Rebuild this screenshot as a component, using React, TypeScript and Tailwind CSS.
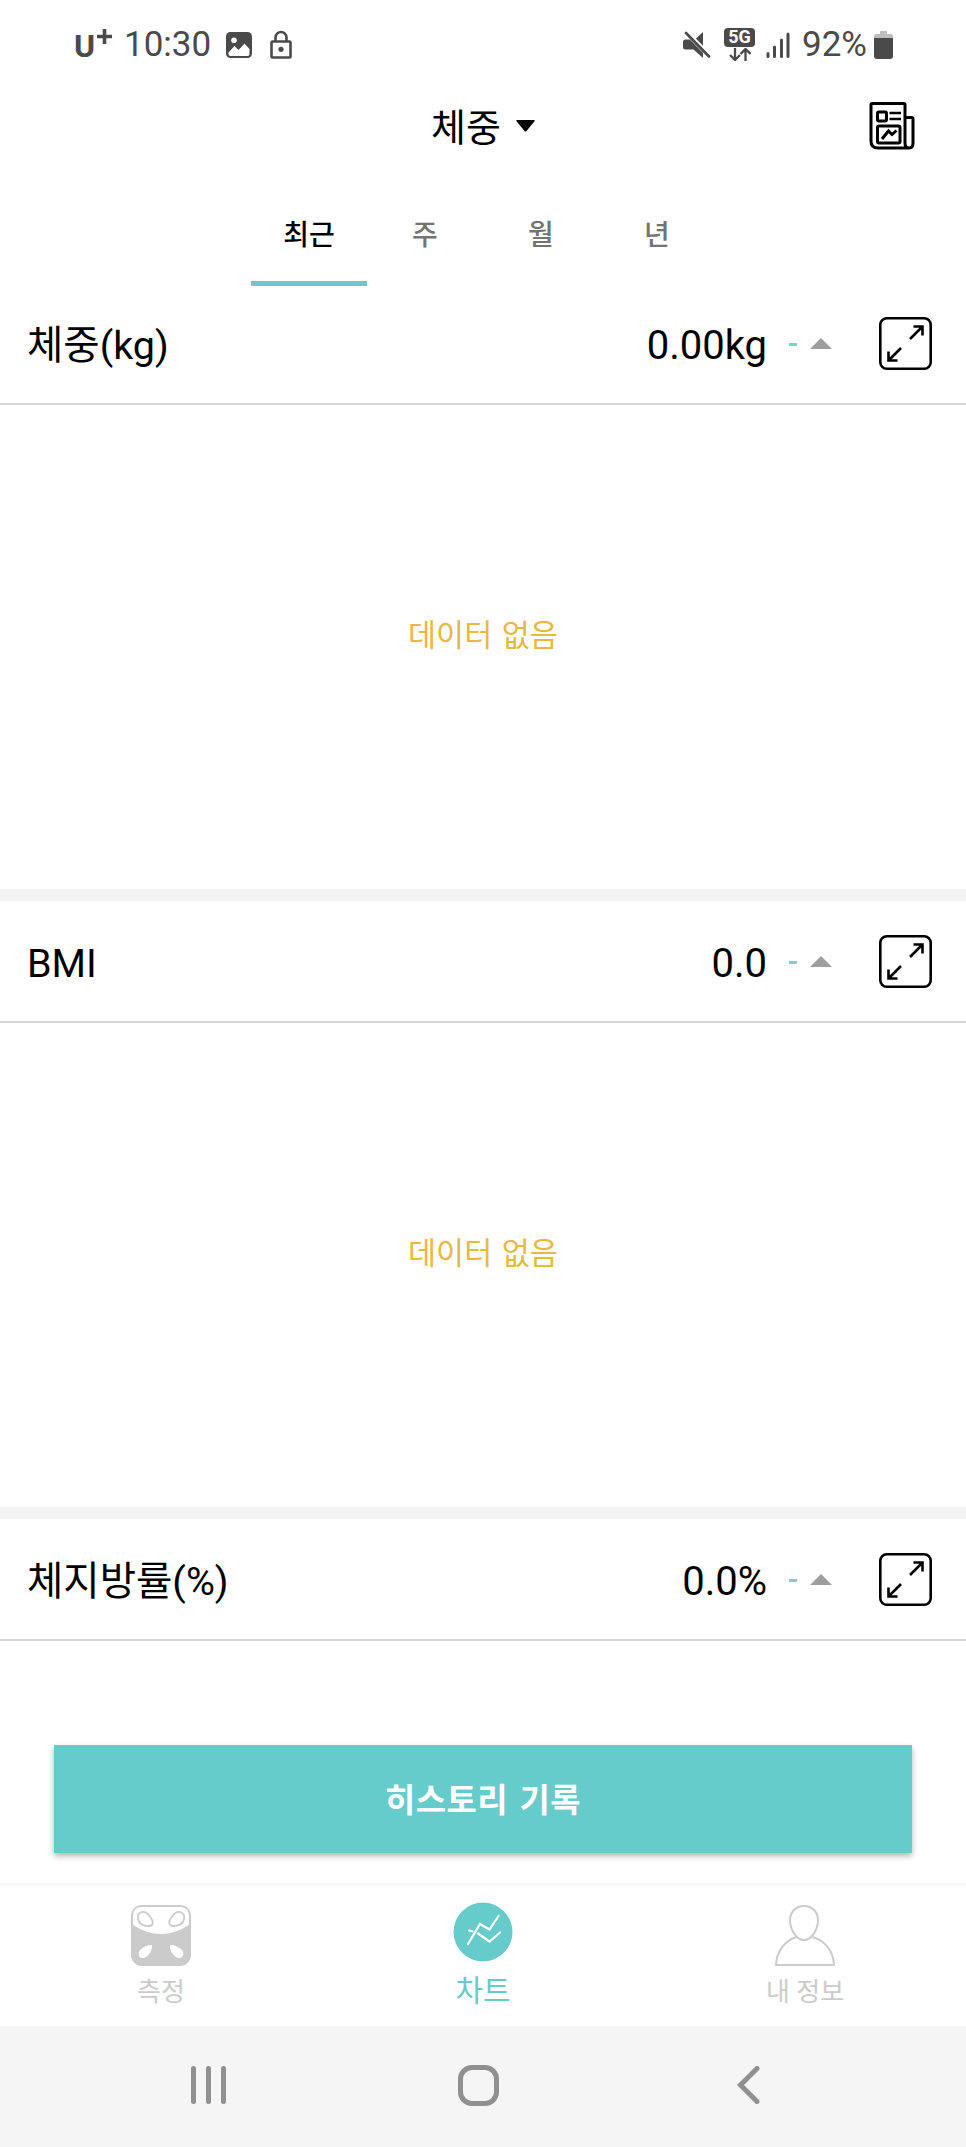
const metrics = [
  { title: '체중(kg)', value: '0.00kg', showChart: true },
  { title: 'BMI', value: '0.0', showChart: true },
  { title: '체지방률(%)', value: '0.0%', showChart: false },
];

const tabs = ['최근', '주', '월', '년'];

function StatusBar() {
  return (
    <div className="flex h-[88px] items-center pl-[74px] pr-[73px] text-[#4a4a4a]">
      <div className="flex w-[50px] items-center">
        <span className="text-[32px] leading-none font-bold mt-[3px]">U</span>
        <svg className="-mt-[15px] ml-[2px]" width="15" height="15" viewBox="0 0 15 15" stroke="currentColor" strokeWidth="3.6">
          <path d="M7.5 0v15M0 7.5h15" />
        </svg>
      </div>
      <span className="w-[102px] text-[35px] leading-none">10:30</span>
      <svg width="26" height="26" viewBox="0 0 26 26" className="mt-[2px]">
        <rect width="26" height="26" rx="4.5" fill="currentColor" />
        <circle cx="8" cy="8.3" r="2.8" fill="#fff" />
        <path d="M2.5 20.5 8.5 14l4 4 6-6.500 5 5.500v5q0 2-2 2H4.500q-2 0-2-2z" fill="#fff" />
      </svg>
      <svg width="22" height="29" viewBox="0 0 22 29" fill="none" stroke="currentColor" strokeWidth="2.6" className="ml-[18px]">
        <rect x="1.500" y="11.500" width="19" height="16" rx="1" />
        <path d="M5.500 11V7.500a5.500 5.500 0 0 1 11 0V11" />
        <circle cx="11" cy="19.300" r="2.600" fill="currentColor" stroke="none" />
      </svg>
      <svg width="28" height="28" viewBox="0 0 28 28" className="ml-auto mt-[2px]">
        <path d="M2.500 8.500H9L20 19v8l-9.500-8.500h-8Q0 18.500 0 16v-5q0-2.500 2.500-2.500zM20 1v14.500L12.500 8z" fill="currentColor" />
        <path d="m3 1 24 24.500" stroke="#fff" strokeWidth="5" />
        <path d="m3 2 23 23.500" stroke="currentColor" strokeWidth="2.700" strokeLinecap="round" />
      </svg>
      <div className="ml-[13px] flex w-[31px] flex-col items-center">
        <span className="flex h-[19px] w-full items-center justify-center rounded-[4px] bg-[#4a4a4a] text-[18px] leading-none font-bold text-white">5G</span>
        <svg width="22" height="13" viewBox="0 0 22 13" fill="none" stroke="currentColor" strokeWidth="2.300" className="mt-[1px]">
          <path d="M6 0v11.500M1 7l5 5 5-5M16.500 13V1.500M11.500 6l5-5 5 5" />
        </svg>
      </div>
      <svg width="24" height="26" viewBox="0 0 24 26" className="ml-[11px] mt-[2px]" stroke="currentColor" strokeWidth="3" strokeLinecap="round">
        <path d="M2 21.500v3M8.500 15v9.500M15.500 8v16.500M22 2v22.500" />
      </svg>
      <span className="ml-[12px] w-[72px] text-[35px] leading-none">92%</span>
      <svg width="19" height="28" viewBox="0 0 19 28" className="mt-[2px]">
        <path d="M6 0h7v3h4q2 0 2 2v4H0V5q0-2 2-2h4z" fill="#bdbdbd" />
        <path d="M0 7h19v18q0 3-3 3H3q-3 0-3-3z" fill="currentColor" />
      </svg>
    </div>
  );
}

function Header() {
  return (
    <header className="flex h-[76px] items-center pr-[51px]">
      <div className="ml-[431px] flex items-center">
        <h1 className="mt-[3px] text-[38px] leading-none">체중</h1>
        <svg width="19" height="12" viewBox="0 0 19 12" className="ml-[15px]">
          <path d="M1 0h17q1.500 0 .5 1.200L10.500 11q-1 1-2 0L.5 1.200Q-.5 0 1 0z" />
        </svg>
      </div>
      <svg width="46" height="48" viewBox="0 0 46 48" fill="none" stroke="#000" strokeWidth="3" className="ml-auto">
        <path d="M3.500 1.500h31q1.500 0 1.500 1.500v38q0 5 4 5t4-5V17q0-1.500-1.500-1.500H36M40 46H9q-7 0-7-7V3q0-1.500 1.500-1.500" />
        <rect x="8.500" y="10" width="9" height="9" rx="1.500" />
        <path d="M20.500 11H32M20.500 17H32" strokeWidth="2.400" />
        <rect x="8.500" y="24" width="22.500" height="17" rx="1.500" />
        <path d="m13 37 6.500-8 3.500 3.500 4.500-4" />
      </svg>
    </header>
  );
}

function Tabs() {
  return (
    <div className="flex h-[122px] justify-center">
      {tabs.map((tab, i) => (
        <button
          key={tab}
          className={`flex w-[116px] items-center justify-center border-b-[5px] pt-[26px] text-[28px] leading-none font-medium ${
            i === 0 ? 'border-[#6fc8c8] text-black' : 'border-transparent text-[#737373]'
          }`}
        >
          {tab}
        </button>
      ))}
    </div>
  );
}

function MetricSection({ title, value, showChart }: { title: string; value: string; showChart: boolean }) {
  return (
    <section className="shrink-0">
      <div className="flex h-[122px] items-center border-b-2 border-[#d6d6d6] pl-[27px] pr-[34px]">
        <h2 className="mt-[5px] text-[39.5px] leading-none">{title}</h2>
        <span className="mt-[5px] ml-auto text-[40px] leading-none">{value}</span>
        <span className="ml-[22px] h-[3px] w-[8px] bg-[#7fcfce] mt-[3px]" />
        <svg width="22" height="11" viewBox="0 0 22 11" className="ml-[13px]">
          <path d="M11 0l11 11H0z" fill="#9e9e9e" />
        </svg>
        <svg width="53" height="53" viewBox="0 0 53 53" fill="none" stroke="#000" strokeWidth="2.600" className="ml-[47px]">
          <rect x="1.300" y="1.300" width="50.400" height="50.400" rx="6.500" />
          <path d="M31 22 43.500 9.500M34.500 9.500h9v9M22 31 9.500 43.500M9.500 34.500v9h9" />
        </svg>
      </div>
      {showChart && (
        <>
          <div className="flex h-[484px] items-center justify-center pb-[22px] text-[30.5px] [word-spacing:2px] text-[#e8b840]">데이터 없음</div>
          <div className="h-[12px] bg-[#f3f3f3]" />
        </>
      )}
    </section>
  );
}

function BottomNav() {
  return (
    <nav className="grid h-[143px] grid-cols-3 border-t-[3px] border-[#f6f6f6] bg-white text-[#cbcbcb]">
      <button className="flex flex-col items-center pt-[19px]">
        <svg width="60" height="61" viewBox="0 0 60 61">
          <rect width="60" height="61" rx="11" fill="currentColor" />
          <path d="M2 11q0-9 9-9h38q9 0 9 9v9Q30 38 2 20z" fill="#fff" />
          <g fill="none" stroke="currentColor" strokeWidth="1.800">
            <path d="M9 8c4-3 8 0 11 5 3 4 2 8-2 8-5 0-10-2-11-7-.5-3 0-5 2-6z" />
            <path d="M51 8c-4-3-8 0-11 5-3 4-2 8 2 8 5 0 10-2 11-7 .5-3 0-5-2-6z" />
          </g>
          <path d="M20 40c2 0 1 4-1 8-2 3-5 5-8 5-4-1-4-5-2-8 3-3 7-5 11-5zM40 40c-2 0-1 4 1 8 2 3 5 5 8 5 4-1 4-5 2-8-3-3-7-5-11-5z" fill="#fff" />
        </svg>
        <span className="mt-[13px] text-[26px] leading-none">측정</span>
      </button>
      <button className="flex flex-col items-center pt-[16px] text-[#66cccb]">
        <svg width="60" height="60" viewBox="0 0 60 60" fill="none" stroke="#fff" strokeWidth="2.200">
          <circle cx="30" cy="30" r="29.500" fill="currentColor" stroke="none" />
          <path d="M15 42 27 22l9.500 5.500 9-13.500M16 28.500l3.500.8M25 31.500l11.500 8L47 30.500" strokeLinecap="round" />
        </svg>
        <span className="mt-[14px] text-[30px] leading-none">차트</span>
      </button>
      <button className="flex flex-col items-center pt-[19px]">
        <svg width="60" height="61" viewBox="0 0 60 61" fill="none" stroke="currentColor" strokeWidth="2">
          <path d="M29 1c8 0 14 6 14 14 0 9-6 20-14 20s-14-11-14-20C15 7 21 1 29 1z" />
          <path d="M21.500 32C9 36 1.500 47 1 60h58c-.5-13-8-24-21.500-28" />
        </svg>
        <span className="mt-[13px] text-[26px] leading-none">내 정보</span>
      </button>
    </nav>
  );
}

function SystemNav() {
  return (
    <div className="flex h-[121px] items-center bg-[#f5f5f5] pb-[3px] pl-[190px] text-[#909090]">
      <svg width="37" height="38" viewBox="0 0 37 38" stroke="currentColor" strokeWidth="5" strokeLinecap="round">
        <path d="M3.500 2.500v33M18.500 2.500v33M33.500 2.500v33" />
      </svg>
      <span className="ml-[231px] h-[41px] w-[41px] rounded-[14px] border-[5px] border-[#909090]" />
      <svg width="23" height="38" viewBox="0 0 23 38" fill="none" stroke="currentColor" strokeWidth="5" strokeLinecap="round" className="ml-[238px]">
        <path d="M20 2.500 3.500 19 20 35.500" />
      </svg>
    </div>
  );
}

export default function App() {
  return (
    <div className="flex h-[2147px] w-[966px] flex-col bg-white font-[Roboto,'Noto_Sans_CJK_KR',sans-serif] text-black">
      <StatusBar />
      <Header />
      <Tabs />
      {/* header rows tuck slightly under the tab indicator */}
      <main className="-mt-[3px] flex flex-1 flex-col">
        {metrics.map((m) => (
          <MetricSection key={m.title} {...m} />
        ))}
      </main>
      <div className="px-[54px] pb-[30px]">
        <button className="flex h-[108px] w-full items-center justify-center bg-[#66cccb] pt-[4px] text-[33px] font-bold tracking-[0.4px] [word-spacing:3px] text-white shadow-[0_3px_6px_rgba(0,0,0,0.3)]">
          히스토리 기록
        </button>
      </div>
      <BottomNav />
      <SystemNav />
    </div>
  );
}
